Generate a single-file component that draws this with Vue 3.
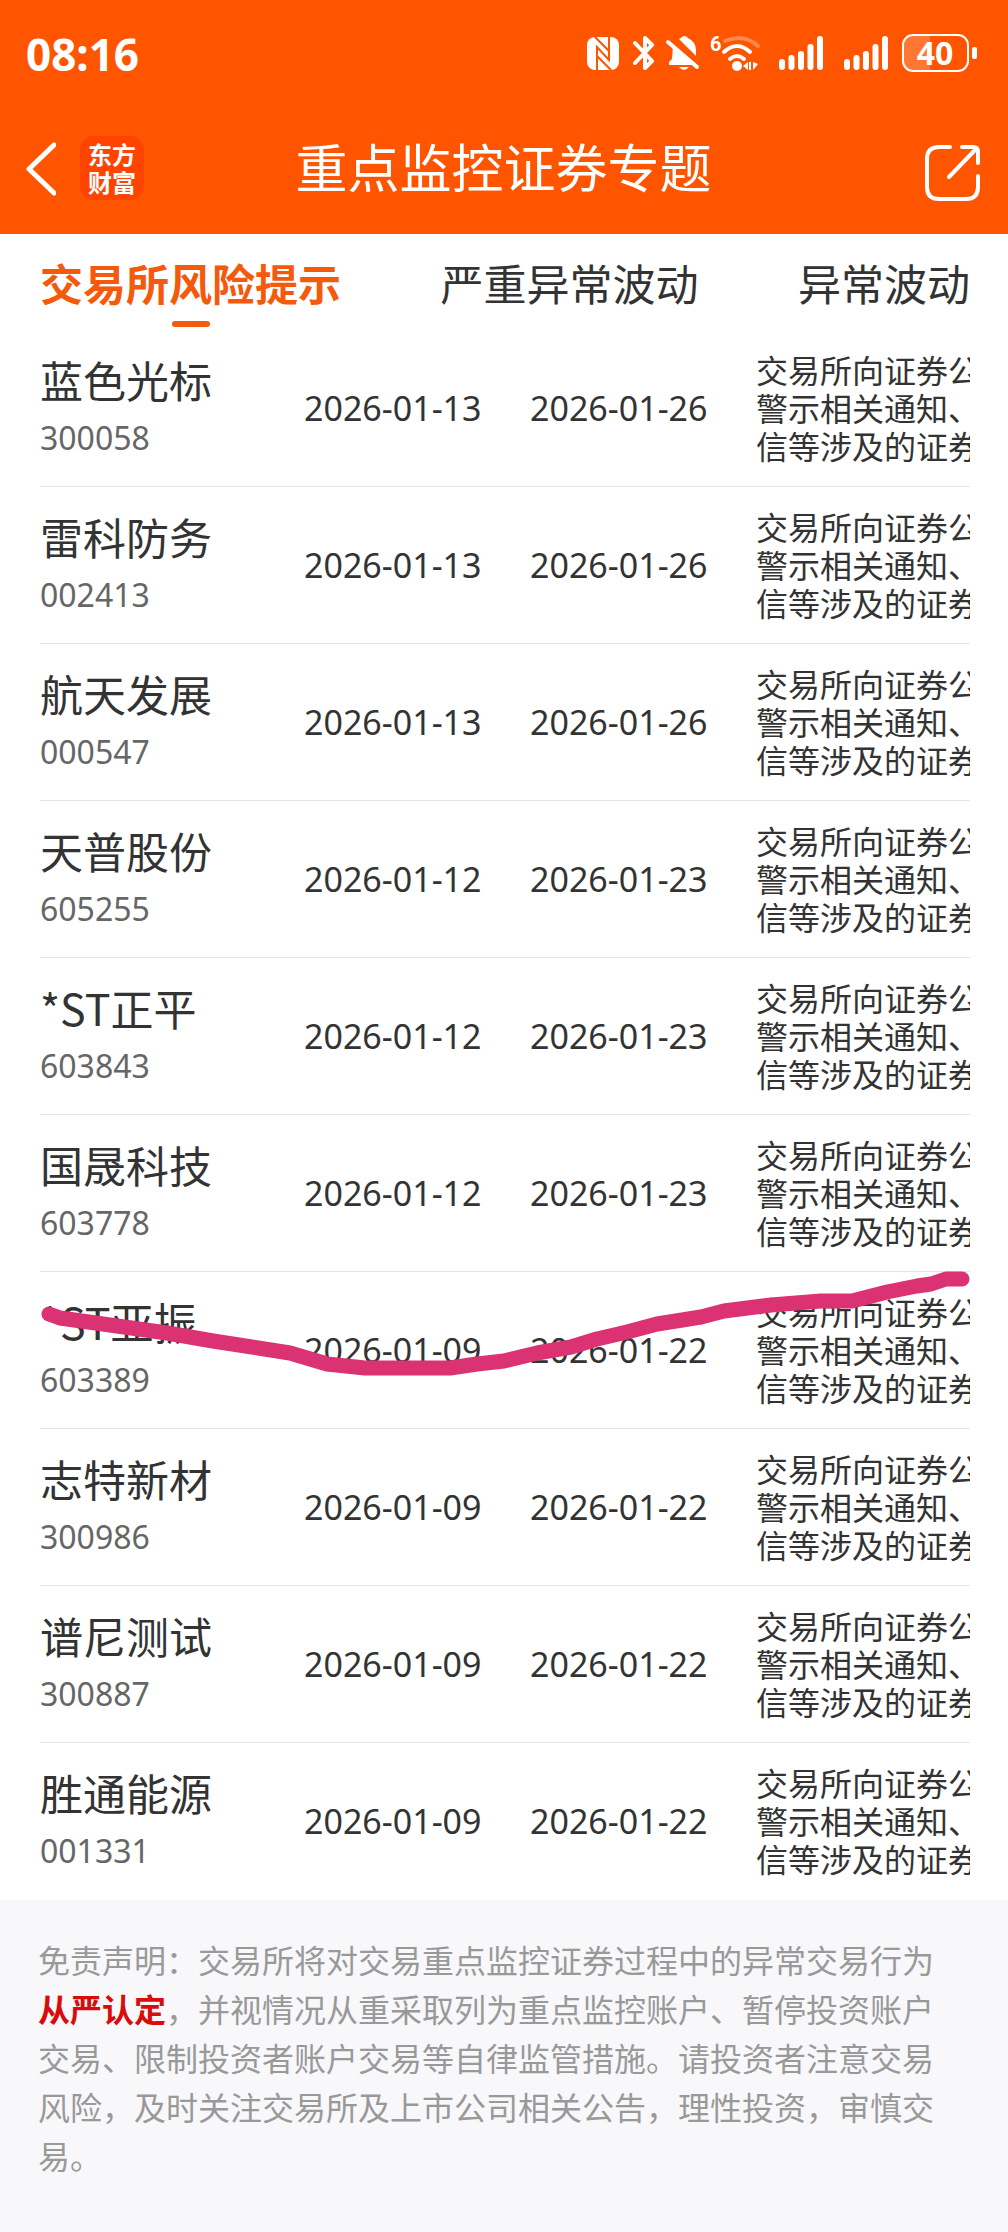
<script setup>
import { ref } from 'vue'

const tabs = ['交易所风险提示', '严重异常波动', '异常波动']
const activeTab = ref(0)

const reason = ['交易所向证券公', '警示相关通知、', '信等涉及的证券']

const stocks = [
  { name: '蓝色光标', code: '300058', start: '2026-01-13', end: '2026-01-26' },
  { name: '雷科防务', code: '002413', start: '2026-01-13', end: '2026-01-26' },
  { name: '航天发展', code: '000547', start: '2026-01-13', end: '2026-01-26' },
  { name: '天普股份', code: '605255', start: '2026-01-12', end: '2026-01-23' },
  { name: '*ST正平', code: '603843', start: '2026-01-12', end: '2026-01-23' },
  { name: '国晟科技', code: '603778', start: '2026-01-12', end: '2026-01-23' },
  { name: '*ST亚振', code: '603389', start: '2026-01-09', end: '2026-01-22' },
  { name: '志特新材', code: '300986', start: '2026-01-09', end: '2026-01-22' },
  { name: '谱尼测试', code: '300887', start: '2026-01-09', end: '2026-01-22' },
  { name: '胜通能源', code: '001331', start: '2026-01-09', end: '2026-01-22' }
]

// height of each signal bar, left to right
const bars = [11, 15, 19, 26, 34]
</script>

<template>
  <div class="page" lang="zh-CN">
    <header class="header">
      <div class="status">
        <span class="time">08:16</span>
        <div class="status-icons">
          <svg width="32" height="40" viewBox="0 0 32 40">
            <rect x="0" y="3" width="32" height="33" rx="8" fill="#fff" />
            <path d="M10 36V13L22 26V3" fill="none" stroke="#f50" stroke-width="2" />
            <path d="M8 3L22 17M10 22L24 36" fill="none" stroke="#f50" stroke-width="2" />
          </svg>
          <svg width="22" height="40" viewBox="0 0 22 40">
            <path d="M2 9L19 27L12 34V4L19 11L2 29" fill="none" stroke="#fff" stroke-width="4" stroke-linejoin="round" stroke-linecap="round" />
          </svg>
          <svg width="29" height="40" viewBox="0 0 29 40" overflow="visible">
            <path d="M10 5Q12 4 13 3Q15 1 18 3L19 4Q27 8 27 16V22Z" fill="#fff" />
            <path d="M4 11L24 31H0V28L3 25Z" fill="#fff" />
            <path d="M-1 8L28 33" stroke="#fff" stroke-width="4" stroke-linecap="round" />
            <path d="M10 33H20Q15 39 10 33Z" fill="#fff" />
          </svg>
          <svg width="46" height="40" viewBox="0 0 46 40" overflow="visible">
            <text x="-2" y="17" class="wifi-generation">6</text>
            <g fill="none" stroke="#fff" stroke-width="4" stroke-linecap="round">
              <path d="M13 7Q32 -1 46 12" opacity="0.3" />
              <path d="M12 18Q25 6 38 18" />
              <path d="M18 25Q25 19 32 25" />
            </g>
            <circle cx="25" cy="32" r="5" fill="#fff" />
            <path d="M31 32L36 28V36ZM37 28V36H39V28ZM41 28L46 30L41 36Z" fill="#fff" />
          </svg>
          <svg v-for="n in 2" :key="n" width="51" height="40" viewBox="0 0 51 40">
            <rect v-for="(h, i) in bars" :key="i" :x="7 + i * 9.5" :y="36 - h" width="6" :height="h" rx="3" fill="#fff" />
          </svg>
          <svg width="75" height="40" viewBox="0 0 75 40">
            <path d="M28 2V36H11Q2 36 2 27V10Q2 2 11 2Z" fill="#fff" opacity="0.2" />
            <rect x="1" y="1" width="65" height="36" rx="10" fill="none" stroke="#fff" stroke-width="2" />
            <rect x="70" y="13" width="5" height="12" rx="2" fill="#fff" />
            <text x="33" y="31" text-anchor="middle" class="battery-level">40</text>
          </svg>
        </div>
      </div>
      <nav class="nav">
        <div class="nav-left">
          <button class="icon-button" type="button" aria-label="返回">
            <svg width="30" height="56" viewBox="0 0 30 56">
              <path d="M28 5L3 29L28 53" fill="none" stroke="#fff" stroke-width="5" stroke-linecap="round" stroke-linejoin="round" />
            </svg>
          </button>
          <a class="logo" href="#"><span>东方</span><span>财富</span></a>
        </div>
        <h1 class="title">重点监控证券专题</h1>
        <button class="icon-button share" type="button" aria-label="分享">
          <svg width="57" height="68" viewBox="0 0 57 68">
            <g fill="none" stroke="#fff" stroke-width="4" stroke-linecap="round" stroke-linejoin="round">
              <path d="M26 13H15Q3 13 3 25V53Q3 65 15 65H42Q54 65 54 53V42" />
              <path d="M38 13H49Q54 13 54 18V29M52 15L25 43" />
            </g>
          </svg>
        </button>
      </nav>
    </header>

    <div class="tabs" role="tablist">
      <button
        v-for="(tab, i) in tabs"
        :key="tab"
        class="tab"
        :class="{ active: i === activeTab }"
        type="button"
        role="tab"
        :aria-selected="i === activeTab"
        @click="activeTab = i"
      >{{ tab }}</button>
    </div>

    <main class="list">
      <table class="stocks">
        <colgroup>
          <col class="col-name" />
          <col class="col-date" />
          <col class="col-date" />
          <col />
        </colgroup>
        <tbody>
          <tr v-for="stock in stocks" :key="stock.code">
            <td>
              <div class="name">{{ stock.name }}</div>
              <div class="code">{{ stock.code }}</div>
            </td>
            <td class="date">{{ stock.start }}</td>
            <td class="date">{{ stock.end }}</td>
            <td class="reason"><div v-for="line in reason" :key="line">{{ line }}</div></td>
          </tr>
        </tbody>
      </table>
      <svg class="marker" viewBox="0 0 930 110" preserveAspectRatio="none" aria-hidden="true">
        <polyline
          transform="translate(-40 -1270)"
          points="49,1314 60,1318 110,1325 167,1333 213,1341 290,1353 327,1364 365,1368 450,1368 477,1364 504,1361 537,1353 571,1347 597,1339 627,1332 657,1324 701,1317 724,1311 771,1305 821,1301 852,1301 887,1292 917,1286 931,1284 946,1279 962,1279"
          fill="none"
          stroke="#da3272"
          stroke-width="15"
          stroke-linecap="round"
          stroke-linejoin="round"
        />
      </svg>
    </main>

    <footer class="disclaimer">
      <p>免责声明：交易所将对交易重点监控证券过程中的异常交易行为<strong>从严认定</strong>，并视情况从重采取列为重点监控账户、暂停投资账户交易、限制投资者账户交易等自律监管措施。请投资者注意交易风险，及时关注交易所及上市公司相关公告，理性投资，审慎交易。</p>
    </footer>
  </div>
</template>

<style>
body {
  background: #f8f8fa;
}
</style>

<style scoped>
.page {
  font-family: "Noto Sans CJK SC", sans-serif;
  color: #333;
  background: #fff;
}

button {
  margin: 0;
  padding: 0;
  border: 0;
  background: none;
  font: inherit;
  color: inherit;
}

svg {
  display: block;
}

.header {
  background: #f50;
  color: #fff;
  padding-bottom: 6px;
}

.status {
  display: flex;
  align-items: center;
  justify-content: space-between;
  height: 108px;
  padding: 0 31px 0 26px;
}

.time {
  font: 700 44px/48px "Noto Sans", sans-serif;
}

.status-icons {
  display: flex;
  gap: 14px;
}

.wifi-generation {
  font: 700 20px Roboto, sans-serif;
  fill: #fff;
}

.battery-level {
  font: 700 32px "Noto Sans", sans-serif;
  fill: #fff;
}

.nav {
  display: grid;
  grid-template-columns: 1fr auto 1fr;
  align-items: center;
  height: 120px;
  padding: 0 27px 0 26px;
}

.nav-left {
  display: flex;
  align-items: center;
  gap: 24px;
}

.logo {
  display: flex;
  flex-direction: column;
  align-items: center;
  justify-content: center;
  width: 64px;
  height: 64px;
  border-radius: 14px;
  background: #ff4400;
  color: #fff;
  font-size: 24px;
  font-weight: 700;
  line-height: 28px;
  text-decoration: none;
}

.title {
  margin: 0;
  padding-bottom: 4px;
  font-size: 52px;
  font-weight: 400;
  line-height: 60px;
}

.share {
  justify-self: end;
}

.tabs {
  display: flex;
  justify-content: space-between;
  height: 96px;
  padding: 0 38px 0 40px;
}

.tab {
  display: flex;
  flex-direction: column;
  align-items: center;
  gap: 9px;
  padding-top: 18px;
  font-size: 43px;
  line-height: 60px;
}

.tab.active {
  color: #f5590c;
  font-weight: 700;
}

.tab.active::after {
  content: "";
  width: 38px;
  height: 6px;
  border-radius: 3px;
  background: #f5590c;
}

.list {
  position: relative;
  margin: 0 38px 0 40px;
  overflow: hidden;
}

.stocks {
  width: 100%;
  table-layout: fixed;
  border-collapse: separate;
  border-spacing: 0;
}

.col-name {
  width: 264px;
}

.col-date {
  width: 226px;
}

.stocks td {
  box-sizing: border-box;
  height: 157px;
  padding: 0;
  border-bottom: 1px solid #e5e5e5;
  vertical-align: middle;
  white-space: nowrap;
}

.stocks tr:last-child td {
  border-bottom-color: transparent;
}

.name {
  font-size: 43px;
  line-height: 60px;
}

.code {
  color: #666;
  font: 32px/58px "Noto Sans", sans-serif;
}

.stocks .date {
  font: 34px/50px "Noto Sans", sans-serif;
}

.stocks .reason {
  padding-bottom: 2px;
  overflow: hidden;
  font-size: 32px;
  line-height: 38px;
}

.marker {
  position: absolute;
  top: 940px;
  left: 0;
  width: 100%;
  height: 110px;
}

.disclaimer {
  padding: 35px 50px 52px 38px;
  background: #f8f8fa;
  color: #999;
  font-size: 32px;
  line-height: 49px;
}

.disclaimer p {
  margin: 0;
}

.disclaimer strong {
  color: #d90b0b;
  font-weight: 700;
}
</style>
